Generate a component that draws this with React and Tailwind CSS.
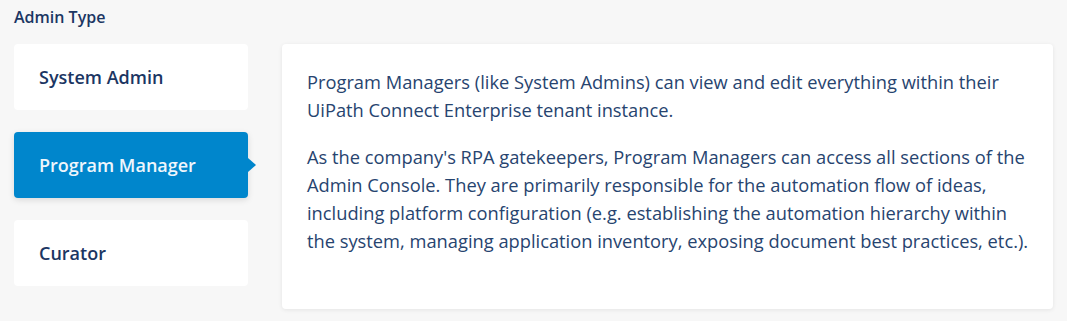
import React, { useState } from "react";

const roles = [
  { id: "system", label: "System Admin" },
  { id: "program", label: "Program Manager" },
  { id: "curator", label: "Curator" },
];

const RoleCard = ({ label, active, onClick }) => {
  return (
    <button
      type="button"
      onClick={onClick}
      className={
        "relative flex h-[66px] w-[234px] items-center rounded-[4px] pt-[1px] pl-[25px] text-left text-[18px] font-semibold " +
        (active
          ? "bg-[#0086cc] text-[#eef6fc] shadow-[0_2px_6px_rgba(0,0,0,0.12)]"
          : "bg-white text-[#1b3663]")
      }
    >
      {label}
      {active && (
        <span className="absolute top-1/2 right-[-8px] h-0 w-0 -translate-y-1/2 border-y-[7px] border-l-[8px] border-y-transparent border-l-[#0086cc]" />
      )}
    </button>
  );
};

export default function App() {
  const [active, setActive] = useState("program");

  return (
    <div className="h-[321px] w-[1067px] bg-[#f7f7f7] font-['Open_Sans',sans-serif]">
      <div className="px-[14px] pt-[5px] text-[16px] leading-[24px] font-semibold text-[#1b3663]">Admin Type</div>
      <div className="mt-[15px] flex gap-[34px] px-[14px]">
        <div className="flex flex-col gap-[22px]">
          {roles.map((r) => (
            <RoleCard key={r.id} label={r.label} active={active === r.id} onClick={() => setActive(r.id)} />
          ))}
        </div>
        <div className="h-[265px] w-[773px] rounded-[4px] bg-white pt-[24px] pr-[16px] pl-[25px] text-[18.3px] leading-[28px] text-[#27446f] shadow-[0_1px_4px_rgba(0,0,0,0.08)]">
          <p>
            Program Managers (like System Admins) can view and edit everything within their
            <br />
            UiPath Connect Enterprise tenant instance.
          </p>
          <p className="mt-[19px]">
            As the company's RPA gatekeepers, Program Managers can access all sections of the
            <br />
            Admin Console. They are primarily responsible for the automation flow of ideas,
            <br />
            including platform configuration (e.g. establishing the automation hierarchy within
            <br />
            the system, managing application inventory, exposing document best practices, etc.).
          </p>
        </div>
      </div>
    </div>
  );
}
